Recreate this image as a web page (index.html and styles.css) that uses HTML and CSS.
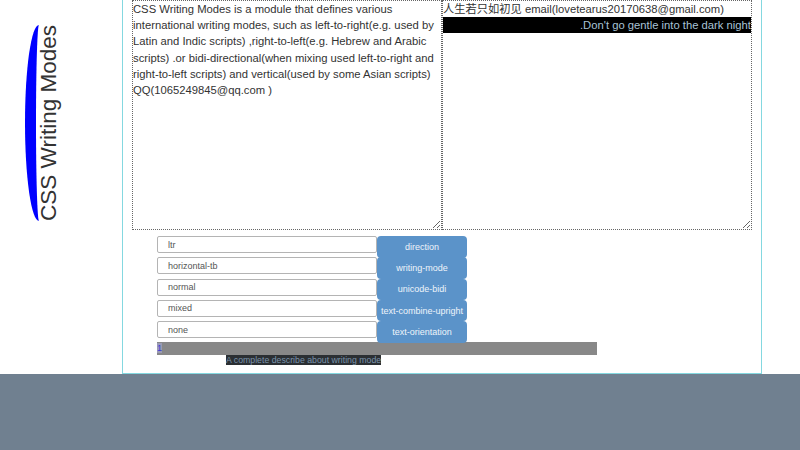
FILE: index.html
```html
<!DOCTYPE html>
<html lang="en">
<head>
<meta charset="utf-8">
<title>CSS Writing Modes</title>
<link rel="stylesheet" href="styles.css">
</head>
<body>
<div class="page">
  <div class="top">
    <aside class="side">
      <h1 class="title">CSS Writing Modes</h1>
    </aside>
    <main class="panel">
      <div class="boxes">
        <div class="box">CSS Writing Modes is a module that defines various international writing modes, such as left-to-right(e.g. used by Latin and Indic scripts) ,right-to-left(e.g. Hebrew and Arabic scripts) .or bidi-directional(when mixing used left-to-right and right-to-left scripts) and vertical(used by some Asian scripts) QQ(1065249845@qq.com )</div>
        <div class="box">人生若只如初见 email(lovetearus20170638@gmail.com)<div class="night">Don't go gentle into the dark night.</div></div>
      </div>
      <form class="controls">
        <div class="row"><input class="field" type="text" value="ltr" readonly><button class="btn" type="button">direction</button></div>
        <div class="row"><input class="field" type="text" value="horizontal-tb" readonly><button class="btn" type="button">writing-mode</button></div>
        <div class="row"><input class="field" type="text" value="normal" readonly><button class="btn" type="button">unicode-bidi</button></div>
        <div class="row"><input class="field" type="text" value="mixed" readonly><button class="btn" type="button">text-combine-upright</button></div>
        <div class="row"><input class="field" type="text" value="none" readonly><button class="btn" type="button">text-orientation</button></div>
      </form>
      <div class="bar"><span class="num">1</span></div>
      <p class="caption"><span>A complete describe about writing mode</span></p>
    </main>
  </div>
  <footer class="footer"></footer>
</div>
</body>
</html>
```
FILE: styles.css
```css
html, body {
  margin: 0;
  padding: 0;
  height: 100%;
}
body {
  font-family: "Liberation Sans", Arial, "Noto Sans CJK SC", sans-serif;
  color: #333;
  background: #fff;
}
.page {
  display: flex;
  flex-direction: column;
  height: 100%;
}
.top {
  display: flex;
  height: 374px;
  flex: none;
  background: #fff;
}
.side {
  width: 122px;
  flex: none;
}
.title {
  writing-mode: vertical-rl;
  transform: rotate(180deg);
  inline-size: max-content;
  margin: 25px 0 0 25px;
  padding: 0 1px;
  font-size: 22.5px;
  font-weight: normal;
  line-height: 24px;
  color: #333;
  border-right: 11px solid #0000ff;
  border-top-right-radius: 14px 50%;
  border-bottom-right-radius: 14px 50%;
}
.panel {
  width: 640px;
  box-sizing: border-box;
  border: 1px solid #84d8e0;
  border-top: none;
  padding: 0 9px;
}
.boxes {
  display: flex;
}
.box {
  width: 310px;
  height: 230px;
  box-sizing: border-box;
  border: 1px dotted #666;
  font-size: 11.25px;
  line-height: 16.2px;
  resize: both;
  overflow: auto;
}
.night {
  direction: rtl;
  background: #000;
  color: #a9c3d6;
  line-height: 16px;
}
.controls {
  margin: 6px 0 0 25px;
  display: grid;
  grid-auto-rows: 21.25px;
}
.row {
  display: flex;
  align-items: flex-start;
}
.field {
  width: 220px;
  height: 17px;
  box-sizing: border-box;
  margin: 0;
  border: 1px solid #b4b4b4;
  border-radius: 2px;
  padding: 0 10px;
  font-family: "Liberation Sans", Arial, sans-serif;
  font-size: 9px;
  color: #555;
  background: #fff;
}
.btn {
  width: 90px;
  height: 21.5px;
  margin: 0;
  padding: 0;
  border: none;
  border-radius: 4px;
  background: #5b93c9;
  color: #eef4fa;
  font-family: "Liberation Sans", Arial, sans-serif;
  font-size: 9px;
}
.bar {
  margin: 0 0 0 25px;
  width: 440px;
  height: 12.5px;
  background: #888;
  font-size: 9px;
  line-height: 12.5px;
}
.num {
  color: #3b3bd6;
  background: #9a9ab6;
}
.caption {
  margin: 0 0 0 94px;
  font-size: 8.75px;
  line-height: 11px;
}
.caption span {
  background: #2b2f33;
  color: #7a93ab;
}
.footer {
  flex: 1;
  background: #708090;
}
```
